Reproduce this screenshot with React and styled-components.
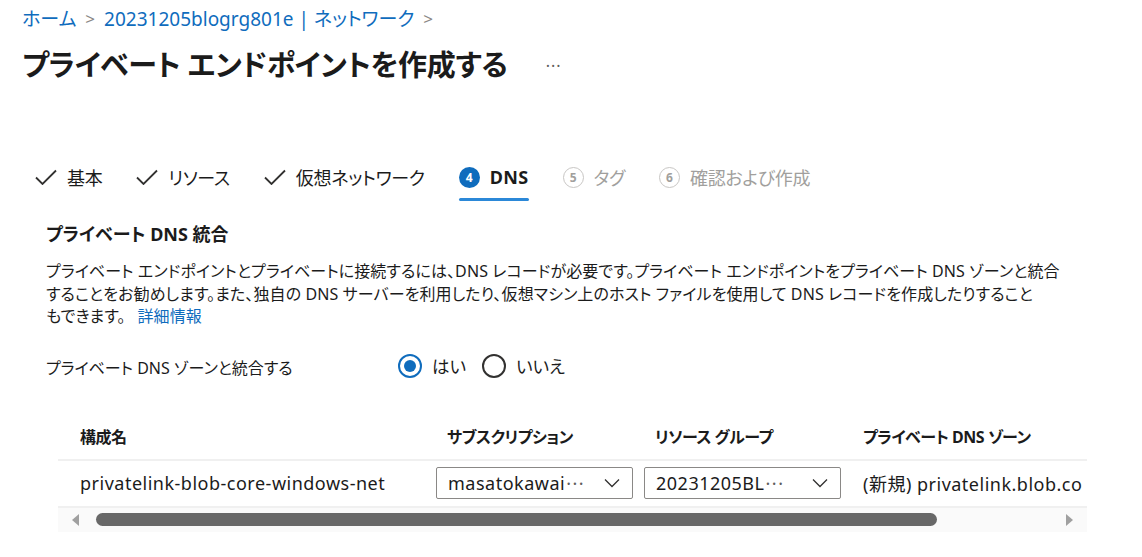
import React from 'react';
import styled, { createGlobalStyle } from 'styled-components';

const GlobalStyle = createGlobalStyle`
    body {
        margin: 0;
        background: #ffffff;
        font-family: "Noto Sans", "Noto Sans CJK JP", sans-serif;
        font-feature-settings: "palt";
        color: #1b1b1b;
    }
`;

const Page = styled.div`
    width: 1142px;
    height: 557px;
    overflow: hidden;
    padding: 6px 0 0 22px;
    box-sizing: border-box;
`;

const Breadcrumb = styled.nav`
    display: flex;
    align-items: center;
    gap: 9px;
    font-size: 19px;
    height: 24px;
    color: #0f6cbd;
`;

const Crumb = styled.a`
    color: #0f6cbd;
    text-decoration: none;
`;

const Chevron = styled.span`
    color: #8a8886;
    font-size: 17px;
`;

const TitleRow = styled.div`
    display: flex;
    align-items: center;
    gap: 38px;
    margin-top: 12px;
    height: 42px;
`;

const Title = styled.h1`
    margin: 0;
    font-size: 29px;
    font-weight: 700;
    letter-spacing: -0.3px;
`;

const More = styled.span`
    font-size: 16px;
    color: #605e5c;
    letter-spacing: 1px;
    margin-top: -4px;
`;

const Tabs = styled.div`
    display: flex;
    align-items: center;
    gap: 34px;
    margin: 69px 0 0 13px;
    height: 48px;
`;

const Tab = styled.div`
    position: relative;
    display: flex;
    align-items: center;
    gap: 10px;
    height: 48px;
    font-size: 18px;
    letter-spacing: ${(p) => (p.$active ? '0.4px' : '-0.3px')};
    font-weight: ${(p) => (p.$active ? 700 : 400)};
    color: ${(p) => (p.$disabled ? '#a19f9d' : '#1b1b1b')};
    &::after {
        content: '';
        display: ${(p) => (p.$active ? 'block' : 'none')};
        position: absolute;
        left: 0;
        right: 0;
        bottom: 0;
        height: 3px;
        border-radius: 2px;
        background: #2b88d8;
    }
`;

const StepNum = styled.span`
    width: 21px;
    height: 21px;
    border-radius: 50%;
    box-sizing: border-box;
    display: flex;
    align-items: center;
    justify-content: center;
    font-size: 12px;
    font-weight: 700;
    letter-spacing: 0;
    background: ${(p) => (p.$active ? '#0f6cbd' : 'transparent')};
    color: ${(p) => (p.$active ? '#ffffff' : '#a19f9d')};
    border: ${(p) => (p.$active ? 'none' : '1.5px solid #c8c6c4')};
`;

const Section = styled.div`
    padding-left: 24px;
`;

const Heading = styled.h2`
    margin: 20px 0 0;
    font-size: 18px;
    font-weight: 700;
    line-height: 26px;
`;

const Para = styled.p`
    margin: 13px 0 0;
    font-size: 16px;
    line-height: 22.5px;
    letter-spacing: 0.1px;
    width: 1060px;
`;

const Line = styled.span`
    display: block;
    white-space: nowrap;
`;

const Link = styled.a`
    color: #0f6cbd;
    text-decoration: none;
    margin-left: 12px;
`;

const RadioRow = styled.div`
    display: flex;
    align-items: center;
    margin-top: 21px;
    height: 34px;
    font-size: 16px;
`;

const RadioLabel = styled.div`
    width: 352px;
    margin-top: 3px;
`;

const RadioGroup = styled.div`
    display: flex;
    align-items: center;
    gap: 10px;
    font-size: 17.5px;
`;

const RadioCircle = styled.span`
    width: 24px;
    height: 24px;
    box-sizing: border-box;
    border-radius: 50%;
    border: 2px solid ${(p) => (p.$checked ? '#0f6cbd' : '#323130')};
    display: flex;
    align-items: center;
    justify-content: center;
    margin-left: ${(p) => (p.$gap ? '6px' : '0')};
    &::after {
        content: '';
        display: ${(p) => (p.$checked ? 'block' : 'none')};
        width: 12px;
        height: 12px;
        border-radius: 50%;
        background: #0f6cbd;
    }
`;

const Table = styled.div`
    margin: 30px 0 0 12px;
    width: 1029px;
    overflow: hidden;
`;

const Grid = styled.div`
    display: grid;
    grid-template-columns: 367px 208px 208px 300px;
    padding-left: 11px;
    align-items: center;
    height: ${(p) => p.$h}px;
    border-bottom: 2px solid #f0f0f0;
`;

const HeadCell = styled.div`
    padding-left: 11px;
    font-size: 16px;
    font-weight: 700;
    letter-spacing: -0.5px;
    white-space: nowrap;
`;

const Cell = styled.div`
    padding-left: ${(p) => (p.$pad ? '11px' : '0')};
    font-size: 18px;
    letter-spacing: 0.5px;
    white-space: nowrap;
`;

const Select = styled.div`
    width: 197px;
    height: 32px;
    box-sizing: border-box;
    border: 1px solid #8a8886;
    border-radius: 2px;
    display: flex;
    align-items: center;
    justify-content: space-between;
    padding: 0 12px 0 11px;
`;

const Dots = styled.span`
    letter-spacing: 1.5px;
    margin-left: 1px;
    color: #605e5c;
`;

const ScrollBar = styled.div`
    display: flex;
    align-items: center;
    gap: 16px;
    height: 24px;
    padding: 0 14px 0 14px;
    background: #fafafa;
`;

const Thumb = styled.div`
    width: 841px;
    height: 13px;
    border-radius: 7px;
    background: #686868;
`;

const Spacer = styled.div`
    flex: 1;
`;

const Check = () => (
    <svg width="22" height="16" viewBox="0 0 22 16">
        <path d="M1 8.5 L7.5 15 L21 1.5" fill="none" stroke="#323130" strokeWidth="1.8" />
    </svg>
);

const Down = () => (
    <svg width="16" height="10" viewBox="0 0 16 10">
        <path d="M1 1.5 L8 8.5 L15 1.5" fill="none" stroke="#323130" strokeWidth="1.3" />
    </svg>
);

const Arrow = ({ dir }) => (
    <svg width="8" height="12" viewBox="0 0 8 12">
        {dir === 'left'
            ? <path d="M7 0 L0 6 L7 12 Z" fill="#a0a0a0" />
            : <path d="M1 0 L8 6 L1 12 Z" fill="#a0a0a0" />}
    </svg>
);

const steps = [
    { label: '基本', done: true },
    { label: 'リソース', done: true },
    { label: '仮想ネットワーク', done: true },
    { label: 'DNS', num: 4, active: true },
    { label: 'タグ', num: 5 },
    { label: '確認および作成', num: 6 },
];

const App = () => {
    return (
        <>
            <GlobalStyle />
            <Page>
                <Breadcrumb>
                    <Crumb>ホーム</Crumb>
                    <Chevron>&gt;</Chevron>
                    <Crumb>20231205blogrg801e | ネットワーク</Crumb>
                    <Chevron>&gt;</Chevron>
                </Breadcrumb>
                <TitleRow>
                    <Title>プライベート エンドポイントを作成する</Title>
                    <More>...</More>
                </TitleRow>

                <Tabs>
                    {steps.map((s) => (
                        <Tab key={s.label} $active={s.active} $disabled={!s.done && !s.active}>
                            {s.done ? <Check /> : <StepNum $active={s.active}>{s.num}</StepNum>}
                            {s.label}
                        </Tab>
                    ))}
                </Tabs>

                <Section>
                    <Heading>プライベート DNS 統合</Heading>
                    <Para>
                        <Line>プライベート エンドポイントとプライベートに接続するには、DNS レコードが必要です。プライベート エンドポイントをプライベート DNS ゾーンと統合</Line>
                        <Line>することをお勧めします。また、独自の DNS サーバーを利用したり、仮想マシン上のホスト ファイルを使用して DNS レコードを作成したりすること</Line>
                        <Line>もできます。<Link href="#">詳細情報</Link></Line>
                    </Para>

                    <RadioRow>
                        <RadioLabel>プライベート DNS ゾーンと統合する</RadioLabel>
                        <RadioGroup>
                            <RadioCircle $checked />
                            <span>はい</span>
                            <RadioCircle $gap />
                            <span>いいえ</span>
                        </RadioGroup>
                    </RadioRow>

                    <Table>
                        <Grid $h={46}>
                            <HeadCell>構成名</HeadCell>
                            <HeadCell>サブスクリプション</HeadCell>
                            <HeadCell>リソース グループ</HeadCell>
                            <HeadCell>プライベート DNS ゾーン</HeadCell>
                        </Grid>
                        <Grid $h={45}>
                            <Cell $pad>privatelink-blob-core-windows-net</Cell>
                            <Cell><Select><span>masatokawai<Dots>···</Dots></span><Down /></Select></Cell>
                            <Cell><Select><span>20231205BL<Dots>···</Dots></span><Down /></Select></Cell>
                            <Cell $pad>(新規) privatelink.blob.co</Cell>
                        </Grid>
                        <ScrollBar>
                            <Arrow dir="left" />
                            <Thumb />
                            <Spacer />
                            <Arrow dir="right" />
                        </ScrollBar>
                    </Table>
                </Section>
            </Page>
        </>
    );
};

export default App;
